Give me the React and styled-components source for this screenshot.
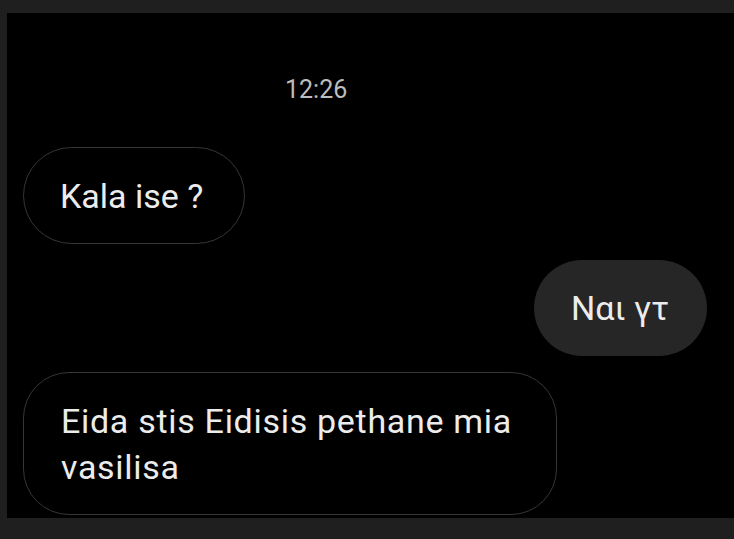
import React from "react";
import styled, { createGlobalStyle } from "styled-components";

const Global = createGlobalStyle`
  html, body { margin: 0; padding: 0; background: #1f1f1f; }
  body { font-family: Roboto, "Noto Sans", "Liberation Sans", sans-serif; }
`;

const Frame = styled.div`
  width: 734px;
  height: 539px;
  box-sizing: border-box;
  padding: 13px 0 21px 7px;
  background: #1f1f1f;
  overflow: hidden;
`;

const Panel = styled.div`
  height: 100%;
  background: #000;
  display: flex;
  flex-direction: column;
  box-sizing: border-box;
  padding: 0 27px 0 16px;
`;

const Time = styled.div`
  align-self: flex-start;
  margin: 63px 0 0 262px;
  height: 28px;
  font-size: 25px;
  line-height: 28px;
  color: #bdbdbd;
`;

const Row = styled.div`
  display: flex;
  justify-content: ${(p) => (p.$out ? "flex-end" : "flex-start")};
  margin-top: ${(p) => p.$gap}px;
`;

const Bubble = styled.div`
  box-sizing: border-box;
  width: ${(p) => p.$w}px;
  min-height: ${(p) => p.$h}px;
  padding: ${(p) => p.$pad};
  border-radius: ${(p) => p.$r}px;
  border: ${(p) => (p.$out ? "none" : "1.5px solid #363636")};
  background: ${(p) => (p.$out ? "#262626" : "transparent")};
  color: #ececec;
  font-size: 34px;
  line-height: 46px;
  letter-spacing: ${(p) => p.$ls || 0}px;
  display: flex;
  align-items: center;
`;

export default function App() {
  return (
    <>
      <Global />
      <Frame>
        <Panel>
          <Time>12:26</Time>
          <Row $gap={43}>
            <Bubble $h={97} $w={222} $r={49} $pad="0 0 0 36px">
              Kala ise ?
            </Bubble>
          </Row>
          <Row $out $gap={16}>
            <Bubble $out $h={96} $w={173} $r={48} $pad="0 0 0 37px">
              Ναι γτ
            </Bubble>
          </Row>
          <Row $gap={16}>
            <Bubble $h={143} $w={534} $r={46} $ls={0.7} $pad="8px 14px 8px 37px">
              Eida stis Eidisis pethane mia vasilisa
            </Bubble>
          </Row>
        </Panel>
      </Frame>
    </>
  );
}
